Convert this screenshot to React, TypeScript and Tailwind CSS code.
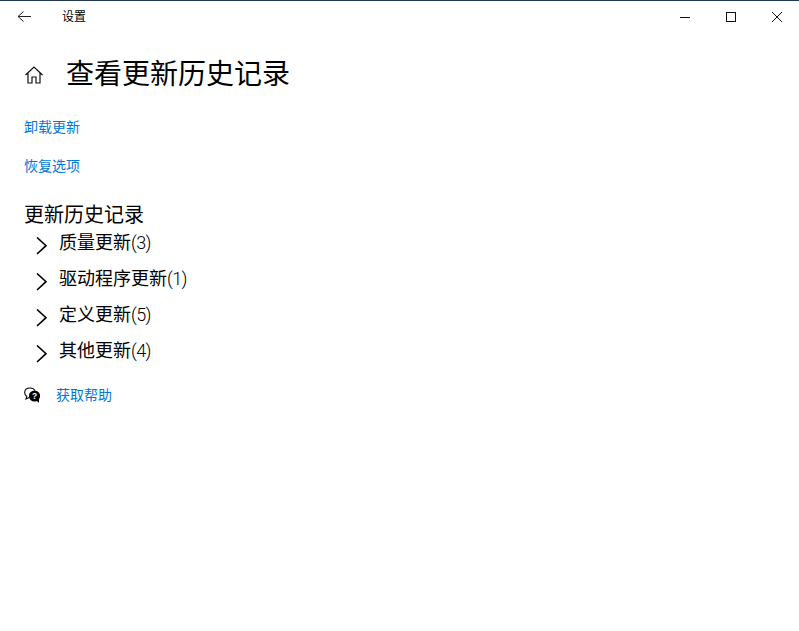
const cjk = { fontFamily: 'Roboto, "Noto Sans CJK SC", "Noto Sans", sans-serif' };

function Chevron() {
  return (
    <svg width="14" height="18" viewBox="0 0 14 18" fill="none" stroke="#000" strokeWidth="1.6" className="shrink-0">
      <path d="M2 0.5 L11 8.7 L2 17" />
    </svg>
  );
}

const items = [
  ["质量更新", "(3)"],
  ["驱动程序更新", "(1)"],
  ["定义更新", "(5)"],
  ["其他更新", "(4)"],
];

export default function App() {
  return (
    <div className="w-[799px] h-[631px] bg-white text-black overflow-hidden flex flex-col font-normal" style={cjk}>
      <div className="h-px bg-[#1f3a4f]" />
      <div className="h-[31px] flex items-center">
        <svg width="14" height="12" viewBox="0 0 14 12" fill="none" stroke="#222" strokeWidth="1" className="ml-[17px]">
          <path d="M6.5 0.5 L1 5.5 L6.5 10.5 M1 5.5 H14" />
        </svg>
        <span className="ml-[31px] mt-[1px] text-[12px] leading-none">设置</span>
        <div className="ml-auto flex items-center mr-[16px]">
          <svg width="11" height="11" viewBox="0 0 11 11" fill="none" stroke="#111" strokeWidth="1"><path d="M0 6.5 H10" /></svg>
          <svg width="11" height="11" viewBox="0 0 11 11" fill="none" stroke="#111" strokeWidth="1" className="ml-[35px]"><rect x="0.5" y="1.5" width="9" height="9" /></svg>
          <svg width="12" height="12" viewBox="0 0 12 12" fill="none" stroke="#111" strokeWidth="1" className="ml-[34px]"><path d="M1 1 L11 11 M11 1 L1 11" /></svg>
        </div>
      </div>
      <div className="flex items-center mt-[20px] h-[46px]">
        <svg width="20" height="20" viewBox="0 0 20 20" fill="none" stroke="#111" strokeWidth="1.2" className="ml-[24px]">
          <path d="M1.5 10 L10 2 L18.5 10 M4 8 V18 H8 V12 H12 V18 H16 V8" />
        </svg>
        <h1 className="ml-[22px] text-[28px] leading-none font-normal">查看更新历史记录</h1>
      </div>
      <a className="ml-[24px] mt-[19px] text-[14px] leading-[20px] text-[#0078d7]">卸载更新</a>
      <a className="ml-[24px] mt-[19px] text-[14px] leading-[20px] text-[#0078d7]">恢复选项</a>
      <h2 className="ml-[24px] mt-[26px] text-[20px] leading-[26px] font-normal">更新历史记录</h2>
      <div className="flex flex-col">
        {items.map(([t, n]) => (
          <div key={t} className="h-[36px] flex items-center ml-[35px]">
            <Chevron />
            <span className="ml-[10px] mb-[7px] text-[18px] leading-none">
              {t}
              <span className="tracking-[-0.6px] font-light">{n}</span>
            </span>
          </div>
        ))}
      </div>
      <div className="flex items-center ml-[24px] mt-[13px] h-[20px]">
        <svg width="17" height="17" viewBox="0 0 17 17" className="shrink-0">
          <path d="M6 1 C2.8 1 0.7 3 0.7 5.6 C0.7 7.4 1.6 8.7 2.8 9.5 L2 12 L5 10.4" fill="none" stroke="#000" strokeWidth="1.1" />
          <path d="M6 1 C8.4 1 10.2 2 11 3.6" fill="none" stroke="#000" strokeWidth="1.1" />
          <circle cx="10.5" cy="9" r="5.6" fill="#000" />
          <path d="M12 13 L15 16 L15 11 Z" fill="#000" />
          <text x="10.5" y="12" textAnchor="middle" fontSize="8.5" fontWeight="700" fill="#fff" fontFamily="Liberation Sans">?</text>
        </svg>
        <a className="ml-[15px] text-[14px] leading-[20px] text-[#0078d7]">获取帮助</a>
      </div>
    </div>
  );
}
